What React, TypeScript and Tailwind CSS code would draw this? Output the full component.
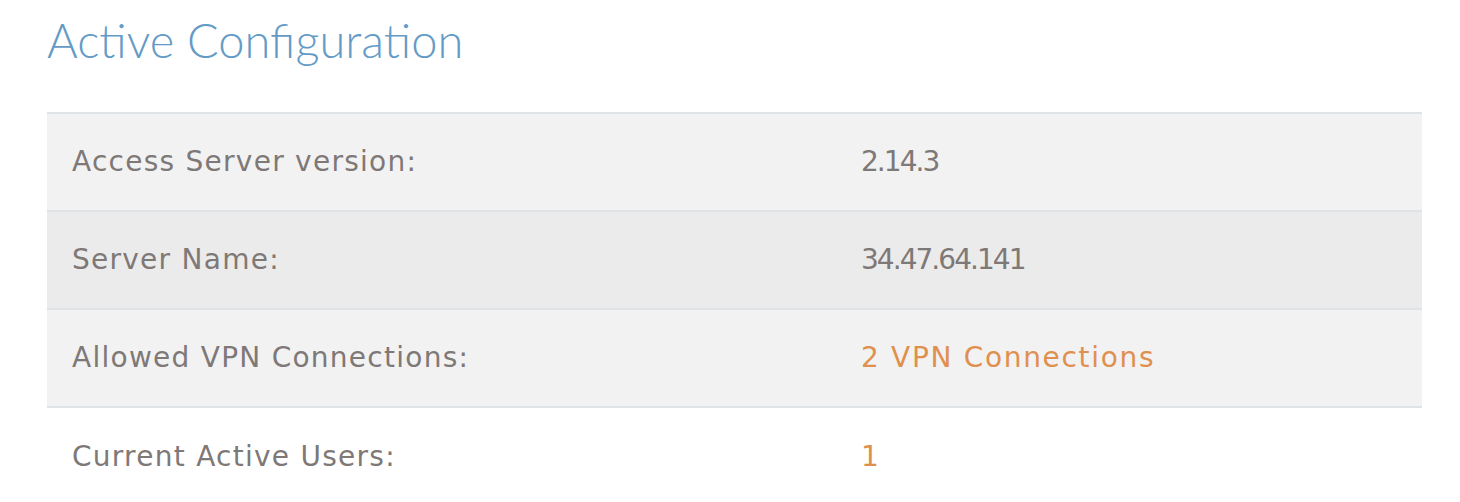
const rows = [
  { label: "Access Server version:", value: "2.14.3", accent: false, numeric: true, bg: "bg-[#f2f2f2]" },
  { label: "Server Name:", value: "34.47.64.141", accent: false, numeric: true, bg: "bg-[#ebebeb]" },
  { label: "Allowed VPN Connections:", value: "2 VPN Connections", accent: true, numeric: false, bg: "bg-[#f2f2f2]" },
  { label: "Current Active Users:", value: "1", accent: true, numeric: true, bg: "bg-white" },
];

export default function App() {
  return (
    <div className="min-h-[502px] bg-white pl-[47px] pr-[38px] pt-[14px]">
      <h1 className="font-['Lato',sans-serif] text-[47px] leading-[52px] font-light text-[#649bc6]">
        Active Configuration
      </h1>
      <div className="mt-[46px] border-t-2 border-[#e0e3e6]">
        {rows.map((r) => (
          <div
            key={r.label}
            className={`flex h-[98px] items-center border-b-2 border-[#e0e3e6] last:border-b-0 ${r.bg} font-['DejaVu_Sans',sans-serif] text-[28px] text-[#7e7877]`}
          >
            <div className="w-[789px] pl-[25px] tracking-[0.045em]">{r.label}</div>
            <div
              className={`pl-[25px] ${r.accent ? "text-[#e0904e]" : ""} ${
                r.numeric ? "tracking-[-0.07em]" : "tracking-[0.06em]"
              }`}
            >
              {r.value}
            </div>
          </div>
        ))}
      </div>
    </div>
  );
}
